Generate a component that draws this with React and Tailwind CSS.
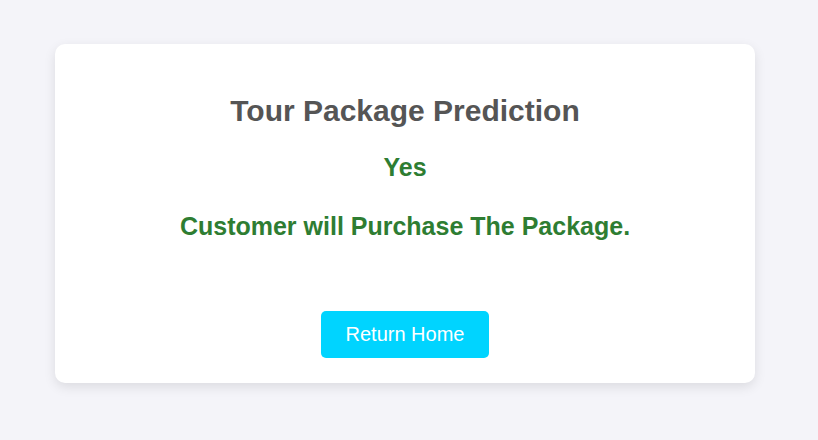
export default function App() {
  return (
    <div className="w-[818px] h-[440px] bg-[#f4f4f9] pt-[44px] pl-[55px]" style={{ fontFamily: '"Liberation Sans", Arial, sans-serif' }}>
      <div className="w-[700px] h-[339px] bg-white rounded-[10px] shadow-[0_4px_12px_rgba(0,0,0,0.1)] flex flex-col items-center pt-[50px]">
        <h2 className="text-[30px] leading-[34px] font-bold text-[#555555]">Tour Package Prediction</h2>
        <p className="mt-[25px] text-[25px] leading-[29px] font-bold text-[#2e7d32]">Yes</p>
        <p className="mt-[30px] text-[25px] leading-[29px] font-bold text-[#2e7d32]">Customer will Purchase The Package.</p>
        <button className="mt-[70px] h-[47px] w-[168px] bg-[#00d4ff] text-white text-[20px] leading-[23px] rounded-[5px]">Return Home</button>
      </div>
    </div>
  );
}
